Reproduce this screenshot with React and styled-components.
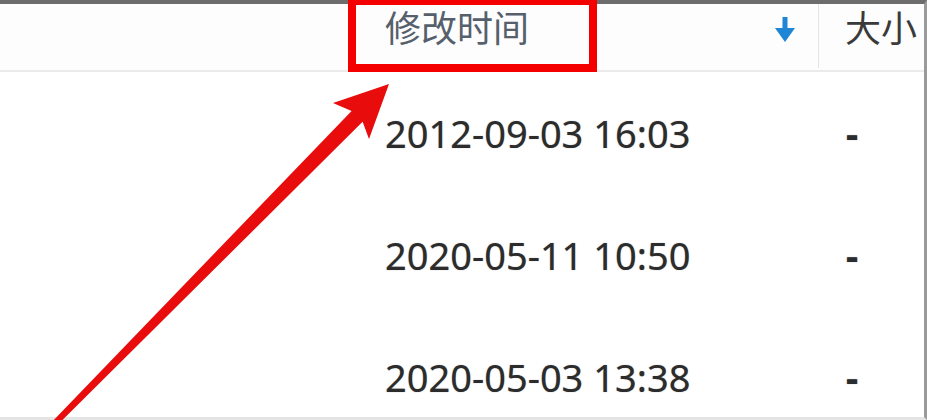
import React from "react";
import styled, { createGlobalStyle } from "styled-components";

const rows = [
	{ date: "2012-09-03 16:03", size: "-" },
	{ date: "2020-05-11 10:50", size: "-" },
	{ date: "2020-05-03 13:38", size: "-" },
];

const App = () => {
	return (
		<>
			<GlobalStyle />
			<Stage>
				<Window>
					<HeaderRow>
						<HeaderCell />
						<DateHeader>
							<HeaderLabel>修改时间</HeaderLabel>
							<SortArrow viewBox="0 0 20 25">
								<path d="M7.5 0 H12.5 V11 H20 L10 25 L0 11 H7.5 Z" />
							</SortArrow>
						</DateHeader>
						<SizeHeader>
							<HeaderLabel $dark>大小</HeaderLabel>
						</SizeHeader>
					</HeaderRow>
					<Body>
						{rows.map((row) => (
							<Row key={row.date}>
								<Cell />
								<DateCell>{row.date}</DateCell>
								<SizeCell>{row.size}</SizeCell>
							</Row>
						))}
					</Body>
				</Window>

				<Highlight />
				<Pointer viewBox="0 0 927 420">
					<polygon points="389,84 333,103 351.6,111 48.9,425.1 53.1,429.3 362.6,121.8 369,139" />
				</Pointer>
			</Stage>
		</>
	);
};

const GlobalStyle = createGlobalStyle`
	html, body {
		margin: 0;
		padding: 0;
		background: #ffffff;
	}
`;

const Stage = styled.div`
	position: relative;
	width: 927px;
	height: 420px;
	overflow: hidden;
`;

const Window = styled.div`
	box-sizing: border-box;
	width: 927px;
	height: 420px;
	display: flex;
	flex-direction: column;
	background: #ffffff;
	border-top: 4px solid #6d6d6d;
	border-right: 3px solid #9a9a9a;
	border-bottom: 3px solid #e4e4e4;
	overflow: hidden;
`;

const columns = `
	display: grid;
	grid-template-columns: 375px 443px 1fr;
`;

const HeaderRow = styled.div`
	${columns}
	height: 66px;
	flex-shrink: 0;
	border-bottom: 2px solid #ebebeb;
	background: #fdfdfd;
`;

const HeaderCell = styled.div`
	display: flex;
	align-items: flex-start;
`;

const DateHeader = styled(HeaderCell)`
	justify-content: space-between;
	padding: 4px 23px 0 10px;
`;

const SizeHeader = styled(HeaderCell)`
	border-left: 1px solid #e4e4e4;
	padding: 4px 0 0 26px;
	margin-bottom: 2px;
`;

const HeaderLabel = styled.span`
	font-family: "Noto Sans CJK SC", "Noto Sans", sans-serif;
	font-size: 36px;
	line-height: 36px;
	color: ${(p) => (p.$dark ? "#3a3a3a" : "#55606c")};
	white-space: nowrap;
`;

const SortArrow = styled.svg`
	width: 20px;
	height: 25px;
	margin-top: 9px;
	fill: #1f86d6;
`;

const Body = styled.div`
	display: flex;
	flex-direction: column;
`;

const Row = styled.div`
	${columns}
	height: 122px;
	flex-shrink: 0;
	align-items: center;
`;

const Cell = styled.div`
	font-family: "Noto Sans", "Noto Sans CJK SC", sans-serif;
	font-size: 38px;
	color: #2c2c2c;
	white-space: nowrap;
	text-shadow: 0 0 1px rgba(40, 40, 40, 0.5);
`;

const DateCell = styled(Cell)`
	padding-left: 10px;
`;

const SizeCell = styled(Cell)`
	padding-left: 28px;
	font-weight: 700;
`;

const Highlight = styled.div`
	position: absolute;
	left: 348px;
	top: -3px;
	width: 249px;
	height: 75px;
	box-sizing: border-box;
	border: 8px solid #f40000;
`;

const Pointer = styled.svg`
	position: absolute;
	left: 0;
	top: 0;
	width: 927px;
	height: 420px;
	pointer-events: none;
	fill: #e80c0c;
`;

export default App;
